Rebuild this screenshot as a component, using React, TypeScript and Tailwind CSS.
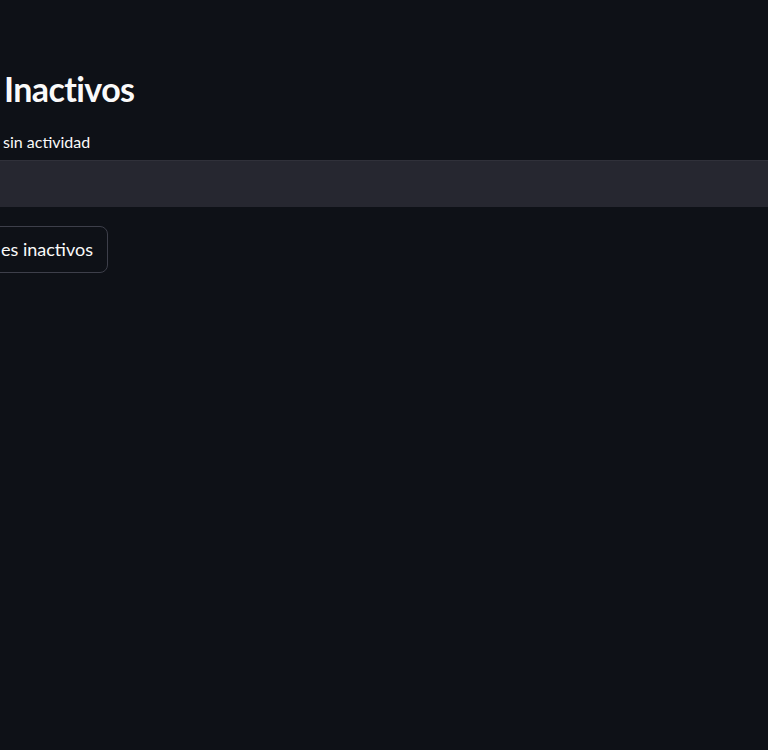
export default function App() {
  return (
    <div
      className="min-h-[750px] w-full overflow-hidden bg-[#0e1117] text-[#fafafa]"
      style={{ fontFamily: '"Source Sans Pro", Lato, "Noto Sans", sans-serif' }}
    >
      <div className="flex flex-col pt-[65px]">
        <h1 className="pl-[4px] text-[34px] font-bold leading-[48px] tracking-[-0.6px]">Inactivos</h1>
        <p className="mt-[19px] pl-[3px] text-[16px] leading-[20px]">sin actividad</p>
        <div className="mt-[8px] h-[47px] w-full border-t border-[#30313a] bg-[#262730]" />
        <div className="mt-[19px] flex">
          <button className="-ml-[20px] flex h-[47px] items-center rounded-[8px] border border-[#3d3f4a] bg-[#0e1117] pl-[20px] pr-[14px] text-[18px] text-[#fafafa]">
            es inactivos
          </button>
        </div>
      </div>
    </div>
  );
}
